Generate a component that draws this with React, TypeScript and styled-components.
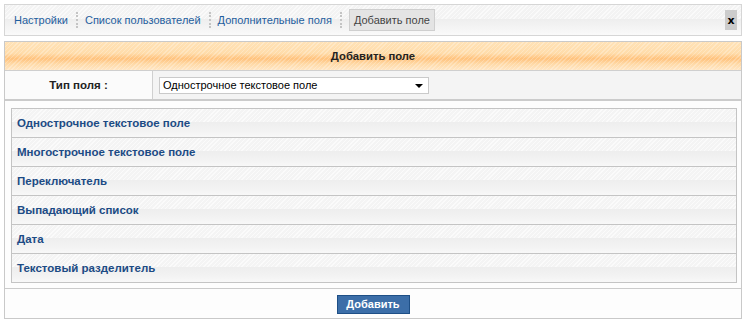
import React from "react";
import styled, { createGlobalStyle } from "styled-components";

const Global = createGlobalStyle`
  html, body { margin: 0; padding: 0; background: #ffffff; }
  body { font-family: "Liberation Sans", Arial, sans-serif; font-size: 11px; }
`;

const Page = styled.div`
  padding: 4px 5px 0 4px;
  display: flex;
  flex-direction: column;
  gap: 5px;
`;

const hatch = `repeating-linear-gradient(135deg, rgba(255,255,255,0.6) 0 1px, rgba(0,0,0,0) 1px 3px)`;

const Toolbar = styled.div`
  height: 30px;
  border: 1px solid #d6d6d6;
  display: flex;
  align-items: center;
  padding: 0 4px 0 9px;
  background:
    linear-gradient(to bottom, rgba(0,0,0,0) 0 48%, #eeeeee 48%, #f5f5f5 80%, #fafafa 100%),
    ${hatch},
    #f3f3f3;
`;

const Crumb = styled.a<{ $active?: boolean }>`
  color: ${(p) => (p.$active ? "#444444" : "#1f5e9e")};
  text-decoration: none;
  font-size: 11px;
  line-height: 20px;
  padding: 0 ${(p) => (p.$active ? "4px" : "0")};
  ${(p) =>
    p.$active
      ? `background: #e4e4e4; border: 1px solid #cfcfcf;`
      : ``}
`;

const Sep = styled.span`
  width: 0;
  height: 16px;
  border-left: 2px dotted #c4c4c4;
  margin: 0 7px 0 8px;
`;

const Close = styled.span`
  margin-left: auto;
  width: 12px;
  height: 20px;
  background: #cccccc;
  color: #000;
  font-weight: bold;
  font-size: 11px;
  display: flex;
  align-items: center;
  justify-content: center;
  font-family: "DejaVu Sans", sans-serif;
`;

const Panel = styled.div`
  border: 1px solid #c9c9c9;
  background: #fdfdfd;
  display: flex;
  flex-direction: column;
`;

const Header = styled.div`
  height: 28px;
  border-bottom: 1px solid #cfcfcf;
  display: flex;
  align-items: center;
  justify-content: center;
  font-weight: bold;
  font-size: 11.25px;
  color: #222;
  background:
    repeating-linear-gradient(135deg, rgba(255,255,255,0.25) 0 1px, rgba(0,0,0,0) 1px 3px),
    linear-gradient(to bottom, #ffe2b6 0%, #ffdcaa 40%, #ffc27c 60%, #ffd9a6 78%, #ffe6c4 100%);
`;

const TypeRow = styled.div`
  display: flex;
  height: 28px;
  border-bottom: 2px solid #cbcbcb;
`;

const LabelCell = styled.div`
  width: 147px;
  border-right: 1px solid #d0d0d0;
  background: #fbfbfb;
  display: flex;
  align-items: center;
  justify-content: center;
  font-weight: bold;
  color: #222;
  font-size: 11.5px;
`;

const ValueCell = styled.div`
  flex: 1;
  background: #f4f4f4;
  display: flex;
  align-items: center;
  padding-left: 6px;
`;

const SelectBox = styled.div`
  position: relative;
  width: 265px;
  height: 15px;
  border: 1px solid #cacaca;
  background: #ffffff;
  font-size: 11px;
  color: #000;
  line-height: 15px;
  padding-left: 3px;
`;

const Arrow = styled.span`
  position: absolute;
  right: 5px;
  top: 6px;
  width: 0;
  height: 0;
  border-left: 4px solid transparent;
  border-right: 4px solid transparent;
  border-top: 4px solid #000;
`;

const ListArea = styled.div`
  padding: 7px 4px 5px 6px;
  border-bottom: 1px solid #cbcbcb;
  background: #fdfdfd;
`;

const List = styled.div`
  border: 1px solid #c4c4c4;
  border-bottom: none;
  display: flex;
  flex-direction: column;
`;

const Item = styled.a`
  height: 28px;
  border-bottom: 1px solid #c4c4c4;
  display: flex;
  align-items: center;
  padding-left: 5px;
  font-weight: bold;
  font-size: 11.5px;
  color: #1c4b85;
  text-decoration: none;
  background:
    linear-gradient(to bottom, rgba(0,0,0,0) 0 48%, #eeeeee 48%, #f3f3f3 80%, #f8f8f8 100%),
    ${hatch},
    #f4f4f4;
`;

const Footer = styled.div`
  height: 29px;
  display: flex;
  align-items: center;
  justify-content: center;
  background: #fdfdfd;
`;

const Button = styled.button`
  width: 73px;
  height: 19px;
  padding: 0;
  border: 1px solid #1e4f86;
  background: #3c6ea8;
  color: #ffffff;
  font-family: "Liberation Sans", Arial, sans-serif;
  font-weight: bold;
  font-size: 11px;
  line-height: 17px;
  margin-top: 1px;
`;

const items = [
  "Однострочное текстовое поле",
  "Многострочное текстовое поле",
  "Переключатель",
  "Выпадающий список",
  "Дата",
  "Текстовый разделитель",
];

export default function App() {
  return (
    <>
      <Global />
      <Page>
        <Toolbar>
          <Crumb href="#">Настройки</Crumb>
          <Sep />
          <Crumb href="#">Список пользователей</Crumb>
          <Sep />
          <Crumb href="#">Дополнительные поля</Crumb>
          <Sep />
          <Crumb $active>Добавить поле</Crumb>
          <Close>x</Close>
        </Toolbar>
        <Panel>
          <Header>Добавить поле</Header>
          <TypeRow>
            <LabelCell>Тип поля :</LabelCell>
            <ValueCell>
              <SelectBox>
                Однострочное текстовое поле
                <Arrow />
              </SelectBox>
            </ValueCell>
          </TypeRow>
          <ListArea>
            <List>
              {items.map((t) => (
                <Item key={t} href="#">
                  {t}
                </Item>
              ))}
            </List>
          </ListArea>
          <Footer>
            <Button>Добавить</Button>
          </Footer>
        </Panel>
      </Page>
    </>
  );
}
